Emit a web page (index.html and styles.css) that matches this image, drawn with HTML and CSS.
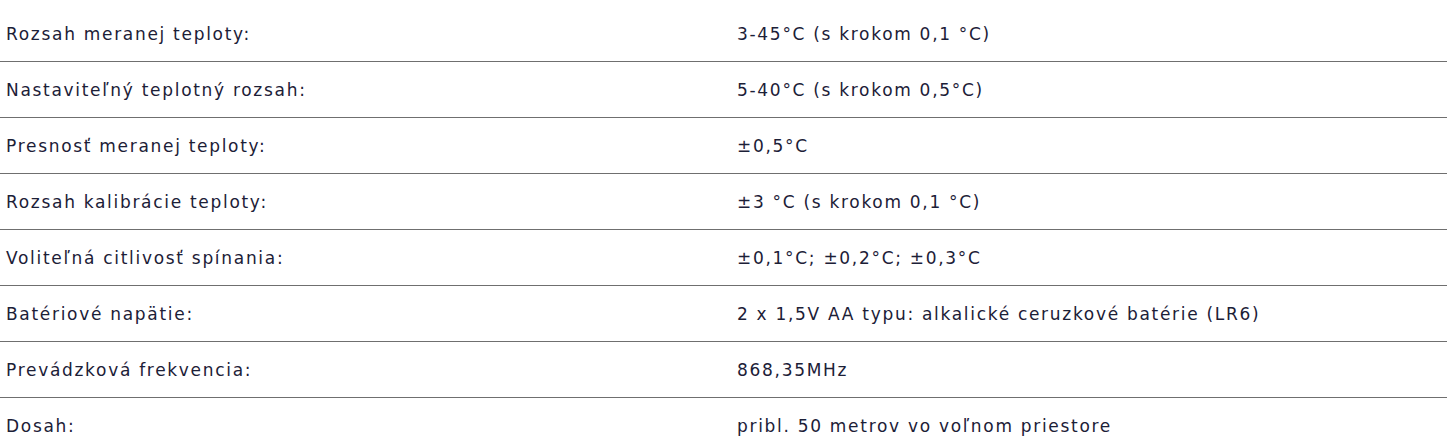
FILE: index.html
```
<!DOCTYPE html>
<html lang="sk">
<head>
<meta charset="utf-8">
<link rel="stylesheet" href="styles.css">
</head>
<body>
<table class="spec">
<colgroup><col class="col-label"><col class="col-value"></colgroup>
<tbody>
<tr><td>Rozsah meranej teploty:</td><td>3-45°C (s krokom 0,1 °C)</td></tr>
<tr><td>Nastaviteľný teplotný rozsah:</td><td>5-40°C (s krokom 0,5°C)</td></tr>
<tr><td>Presnosť meranej teploty:</td><td>±0,5°C</td></tr>
<tr><td>Rozsah kalibrácie teploty:</td><td>±3 °C (s krokom 0,1 °C)</td></tr>
<tr><td>Voliteľná citlivosť spínania:</td><td>±0,1°C; ±0,2°C; ±0,3°C</td></tr>
<tr><td>Batériové napätie:</td><td>2 x 1,5V AA typu: alkalické ceruzkové batérie (LR6)</td></tr>
<tr><td>Prevádzková frekvencia:</td><td>868,35MHz</td></tr>
<tr><td>Dosah:</td><td>pribl. 50 metrov vo voľnom priestore</td></tr>
</tbody>
</table>
</body>
</html>
```
FILE: styles.css
```
html, body {
  margin: 0;
  padding: 0;
  background: #ffffff;
}
body {
  padding-top: 6px;
  font-family: "DejaVu Sans", "Open Sans", sans-serif;
  font-size: 17px;
  color: #1c2037;
  letter-spacing: 1.7px;
}
.spec {
  width: 100%;
  border-collapse: collapse;
  table-layout: fixed;
}
.col-label {
  width: 731px;
}
.spec td {
  height: 55px;
  padding: 0 6px;
  vertical-align: middle;
  border-bottom: 1px solid #6f6f6f;
  line-height: 20px;
  white-space: nowrap;
}
.spec tr:last-child td {
  border-bottom: none;
}
```
